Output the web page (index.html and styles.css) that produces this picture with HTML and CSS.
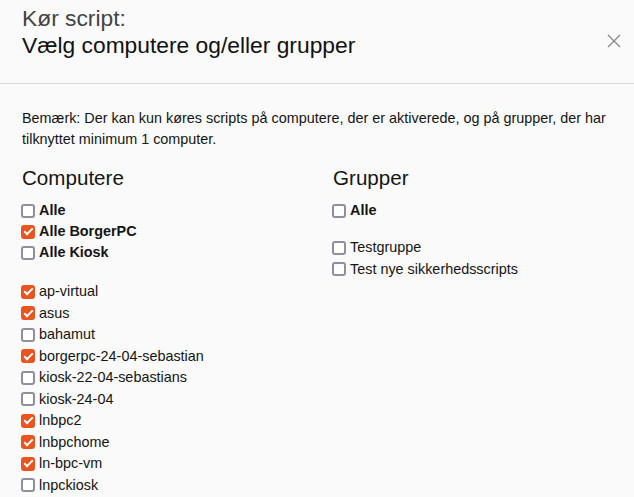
FILE: index.html
```html
<!DOCTYPE html>
<html lang="da">

<head>
    <meta charset="UTF-8">
    <meta name="viewport" content="width=device-width, initial-scale=1.0">
    <title>Kør script</title>
    <link rel="stylesheet" href="styles.css">
</head>

<body>
    <div class="modal">
        <div class="modal-header">
            <h2 class="modal-title">
                <span class="title-sub">Kør script:</span>
                <span class="title-main">Vælg computere og/eller grupper</span>
            </h2>
            <button type="button" class="close-btn" aria-label="Luk">
                <svg width="14" height="14" viewBox="0 0 14 14">
                    <path d="M1 1 L13 13 M13 1 L1 13" stroke="#8a8a8a" stroke-width="1.4" fill="none" />
                </svg>
            </button>
        </div>
        <div class="modal-body">
            <p class="note">Bemærk: Der kan kun køres scripts på computere, der er aktiverede, og på grupper, der har tilknyttet minimum 1 computer.</p>
            <div class="columns">
                <div class="column">
                    <h3>Computere</h3>
                    <div class="check-list bold wide-gap">
                        <label><input type="checkbox"><span class="box"></span>Alle</label>
                        <label><input type="checkbox" checked><span class="box"></span>Alle BorgerPC</label>
                        <label><input type="checkbox"><span class="box"></span>Alle Kiosk</label>
                    </div>
                    <div class="check-list">
                        <label><input type="checkbox" checked><span class="box"></span>ap-virtual</label>
                        <label><input type="checkbox" checked><span class="box"></span>asus</label>
                        <label><input type="checkbox"><span class="box"></span>bahamut</label>
                        <label><input type="checkbox" checked><span class="box"></span>borgerpc-24-04-sebastian</label>
                        <label><input type="checkbox"><span class="box"></span>kiosk-22-04-sebastians</label>
                        <label><input type="checkbox"><span class="box"></span>kiosk-24-04</label>
                        <label><input type="checkbox" checked><span class="box"></span>lnbpc2</label>
                        <label><input type="checkbox" checked><span class="box"></span>lnbpchome</label>
                        <label><input type="checkbox" checked><span class="box"></span>ln-bpc-vm</label>
                        <label><input type="checkbox"><span class="box"></span>lnpckiosk</label>
                    </div>
                </div>
                <div class="column">
                    <h3>Grupper</h3>
                    <div class="check-list bold">
                        <label><input type="checkbox"><span class="box"></span>Alle</label>
                    </div>
                    <div class="check-list">
                        <label><input type="checkbox"><span class="box"></span>Testgruppe</label>
                        <label><input type="checkbox"><span class="box"></span>Test nye sikkerhedsscripts</label>
                    </div>
                </div>
            </div>
        </div>
    </div>
</body>

</html>
```

FILE: styles.css
```css
/* Page */
body {
    margin: 0;
    background-color: #fafafa;
    font-family: "Liberation Sans", Arial, sans-serif;
    color: #151515;
}

/* Header */
.modal-header {
    display: flex;
    justify-content: space-between;
    align-items: flex-start;
    padding: 5px 22px 0 22px;
    height: 78px;
    border-bottom: 1px solid #d8d8d8;
}

.modal-title {
    margin: 0;
    font-weight: normal;
    font-size: 22.8px;
    line-height: 27px;
}

.title-sub {
    display: block;
    color: #444;
}

.title-main {
    display: block;
    color: #111;
}

.close-btn {
    margin-top: 29px;
    margin-right: -9px;
    padding: 0;
    border: none;
    background: none;
    line-height: 0;
    cursor: pointer;
}

/* Body */
.modal-body {
    padding: 24px 22px 0 22px;
}

.note {
    margin: 0 0 16px 0;
    font-size: 14.4px;
    line-height: 21px;
}

.columns {
    display: grid;
    grid-template-columns: 311px 1fr;
}

.column h3 {
    margin: 0 0 10px 0;
    font-weight: normal;
    font-size: 20.6px;
    line-height: 24px;
}

/* Checkbox lists */
.check-list {
    display: flex;
    flex-direction: column;
    margin-bottom: 16px;
}

.check-list.wide-gap {
    margin-bottom: 18px;
}

.check-list label {
    display: flex;
    align-items: center;
    font-size: 14.4px;
    line-height: 21.5px;
    cursor: pointer;
}

.check-list.bold label {
    font-weight: bold;
    line-height: 21px;
}

.check-list input {
    display: none;
}

.box {
    position: relative;
    box-sizing: border-box;
    flex: none;
    width: 14px;
    height: 14px;
    margin: 0 4px 0 -1px;
    border: 2px solid #8f8f9d;
    border-radius: 3px;
    background-color: #fff;
}

input:checked + .box {
    border-color: #e95420;
    background-color: #e95420;
}

/* the white tick */
input:checked + .box::after {
    content: "";
    position: absolute;
    left: 2.5px;
    top: -0.5px;
    width: 3px;
    height: 7px;
    border: solid #fff;
    border-width: 0 2px 2px 0;
    transform: rotate(45deg);
}
```
